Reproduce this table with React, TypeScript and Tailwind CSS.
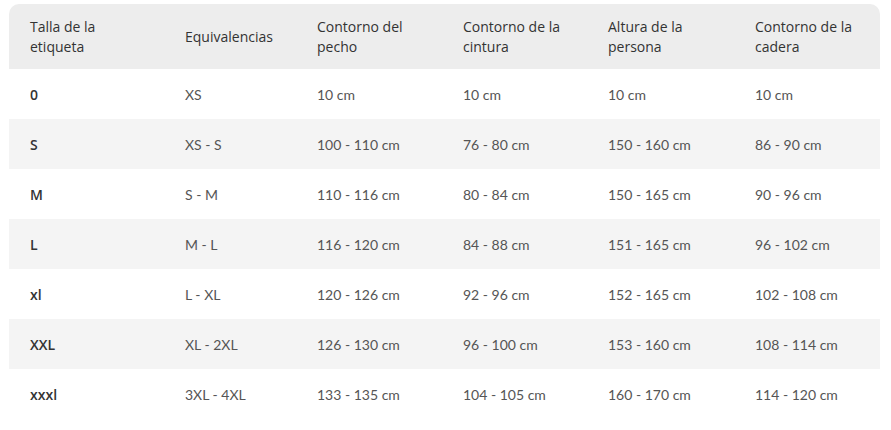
const headers = [
  ['Talla de la', 'etiqueta'],
  ['Equivalencias'],
  ['Contorno del', 'pecho'],
  ['Contorno de la', 'cintura'],
  ['Altura de la', 'persona'],
  ['Contorno de la', 'cadera'],
];

const rows = [
  ['0', 'XS', '10 cm', '10 cm', '10 cm', '10 cm'],
  ['S', 'XS - S', '100 - 110 cm', '76 - 80 cm', '150 - 160 cm', '86 - 90 cm'],
  ['M', 'S - M', '110 - 116 cm', '80 - 84 cm', '150 - 165 cm', '90 - 96 cm'],
  ['L', 'M - L', '116 - 120 cm', '84 - 88 cm', '151 - 165 cm', '96 - 102 cm'],
  ['xl', 'L - XL', '120 - 126 cm', '92 - 96 cm', '152 - 165 cm', '102 - 108 cm'],
  ['XXL', 'XL - 2XL', '126 - 130 cm', '96 - 100 cm', '153 - 160 cm', '108 - 114 cm'],
  ['xxxl', '3XL - 4XL', '133 - 135 cm', '104 - 105 cm', '160 - 170 cm', '114 - 120 cm'],
];

const cols = 'grid grid-cols-[155px_132px_146px_145px_147px_146px]';

export default function App() {
  return (
    <div className="h-[430px] w-[891px] bg-white px-[9px] pt-[4px] font-['Lato','Open_Sans',sans-serif] text-[14px]">
      <div className="w-[871px] overflow-hidden rounded-t-[10px]">
        {/* cabecera */}
        <div className={`${cols} h-[65px] items-center bg-[#ededed] font-['Open_Sans',sans-serif] font-medium leading-[20px] text-[#333]`}>
          {headers.map((h, i) => (
            <div key={i} className="pl-[21px]">
              {h.map((line) => (
                <div key={line}>{line}</div>
              ))}
            </div>
          ))}
        </div>

        {rows.map((r, i) => (
          <div
            key={r[0]}
            className={`${cols} h-[50px] items-center ${i % 2 === 1 ? 'bg-[#f4f4f4]' : 'bg-white'}`}
          >
            {r.map((c, j) => (
              <div
                key={j}
                className={`pl-[21px] ${j === 0 ? "font-['Open_Sans',sans-serif] font-semibold text-[#333]" : 'text-[#555]'}`}
              >
                {c}
              </div>
            ))}
          </div>
        ))}
      </div>
    </div>
  );
}
